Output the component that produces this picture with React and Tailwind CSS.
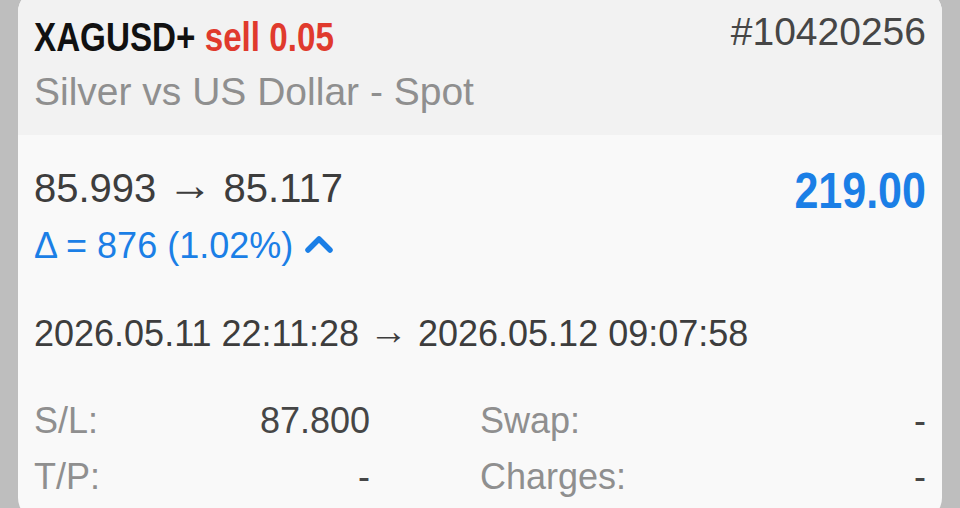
export default function App() {
  const sans = { fontFamily: '"Liberation Sans", Arial, sans-serif' };
  return (
    <div className="w-[960px] h-[508px] overflow-hidden bg-[#bebebe] px-[18px]" style={sans}>
      <div className="-mt-[10px] h-[530px] rounded-[22px] overflow-hidden bg-[#f9f9f9] flex flex-col">
        {/* header */}
        <div className="h-[145px] bg-[#f2f2f2] pt-[10px] px-[16px] flex flex-col">
          <div className="flex justify-between items-start">
            <div className="pt-[13px] text-[40px] leading-[48px] font-bold whitespace-nowrap">
              <div className="inline-block origin-left scale-x-[0.83]">
                <span className="text-[#111111]">XAGUSD+</span>{' '}
                <span className="text-[#e03a2d]">sell 0.05</span>
              </div>
            </div>
            <div className="pt-[8px] text-[39px] leading-[48px] text-[#464646]">#10420256</div>
          </div>
          <div className="mt-[7px] text-[39px] leading-[48px] text-[#8f8f8f] whitespace-nowrap">
            Silver vs US Dollar - Spot
          </div>
        </div>
        {/* body */}
        <div className="px-[16px] pt-[27px] flex flex-col">
          <div className="flex justify-between items-start">
            <div className="flex flex-col">
              <div className="text-[40px] leading-[48px] text-[#3d3d3d] whitespace-nowrap">
                85.993 <span className="text-[45px] align-[2px] leading-none">→</span> 85.117
              </div>
              <div className="mt-[10px] flex items-center gap-[12px] text-[36px] leading-[48px] text-[#1b7fe6] whitespace-nowrap">
                <span>Δ = 876 (1.02%)</span>
                <svg width="28" height="20" viewBox="0 0 28 20" className="mt-[-4px]">
                  <polyline points="3,16 14,5 25,16" fill="none" stroke="#1b7fe6" strokeWidth="5.5" strokeLinecap="round" strokeLinejoin="round" />
                </svg>
              </div>
            </div>
            <div className="mt-[1px] text-[50px] leading-[56px] font-bold text-[#1b7fe6] whitespace-nowrap">
              <div className="inline-block origin-right scale-x-[0.86]">219.00</div>
            </div>
          </div>
          <div className="mt-[40px] text-[36px] leading-[48px] text-[#3d3d3d] whitespace-nowrap">
            2026.05.11 22:11:28 <span className="text-[39px] align-[2px] leading-none">→</span> 2026.05.12 09:07:58
          </div>
          <div className="mt-[39px] grid grid-cols-2 gap-y-[8px] text-[36px] leading-[48px]">
            <div className="flex justify-between pr-[110px]">
              <span className="text-[#8f8f8f]">S/L:</span>
              <span className="text-[#464646]">87.800</span>
            </div>
            <div className="flex justify-between">
              <span className="text-[#8f8f8f]">Swap:</span>
              <span className="text-[#464646]">-</span>
            </div>
            <div className="flex justify-between pr-[110px]">
              <span className="text-[#8f8f8f]">T/P:</span>
              <span className="text-[#464646]">-</span>
            </div>
            <div className="flex justify-between">
              <span className="text-[#8f8f8f]">Charges:</span>
              <span className="text-[#464646]">-</span>
            </div>
          </div>
        </div>
      </div>
    </div>
  );
}
